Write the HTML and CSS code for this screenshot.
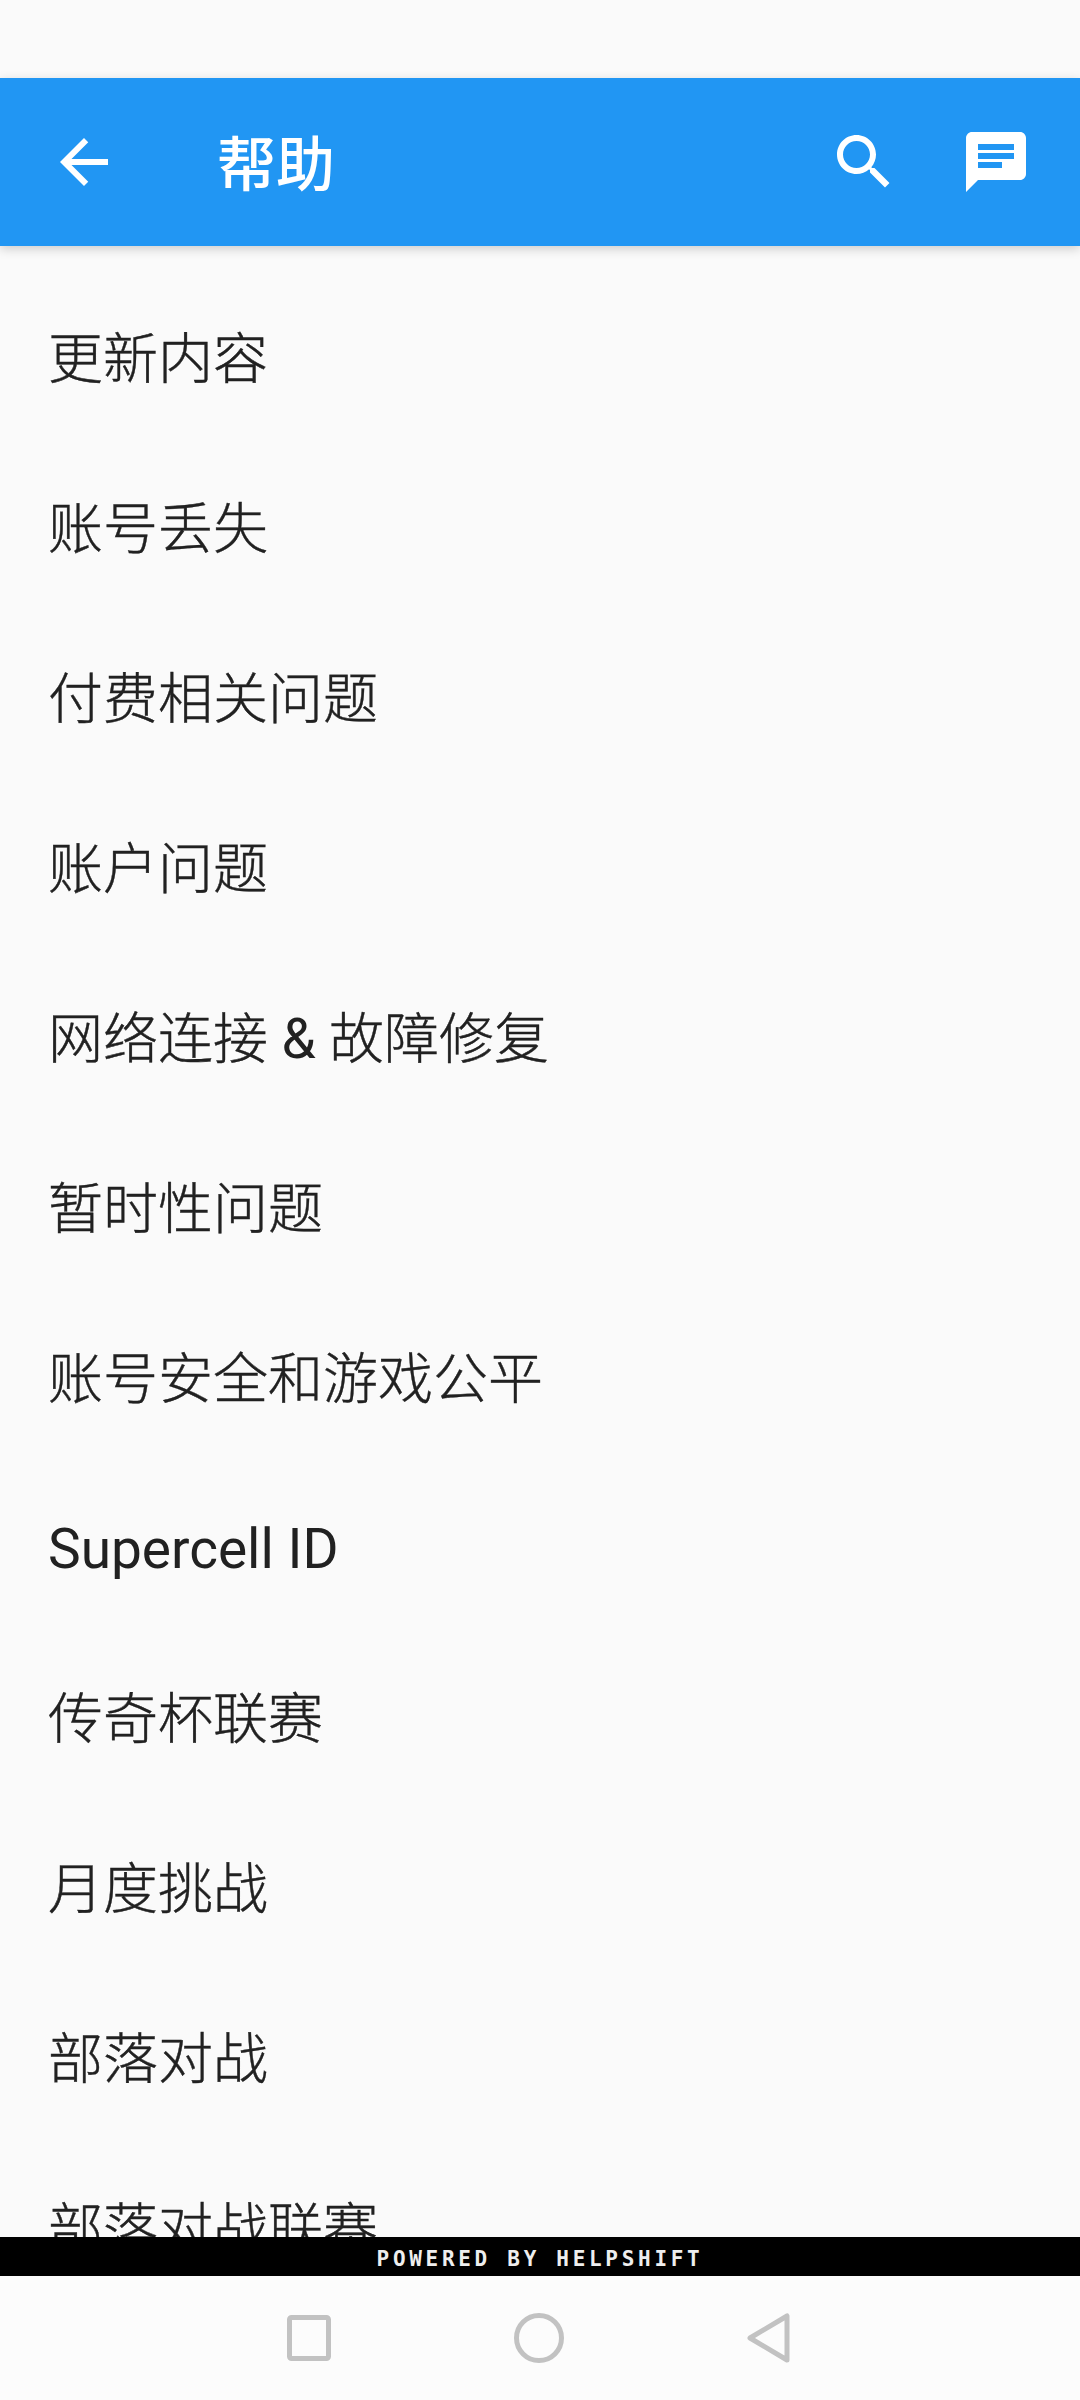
FILE: index.html
```html
<!DOCTYPE html>
<html lang="zh-CN">

<head>
    <meta charset="UTF-8">
    <meta name="viewport" content="width=device-width, initial-scale=1.0">
    <title>帮助</title>
    <link rel="stylesheet" href="styles.css">
</head>

<body>
    <div class="status-bar"></div>

    <header class="app-bar">
        <svg class="icon back-icon" viewBox="0 0 24 24">
            <path d="M20 11H7.83l5.59-5.59L12 4l-8 8 8 8 1.41-1.41L7.83 13H20v-2z" />
        </svg>
        <h1 class="app-title">帮助</h1>
        <svg class="icon search-icon" viewBox="0 0 24 24">
            <path d="M15.5 14h-.79l-.28-.27C15.41 12.59 16 11.11 16 9.5 16 5.91 13.09 3 9.5 3S3 5.91 3 9.5 5.91 16 9.5 16c1.61 0 3.09-.59 4.23-1.57l.27.28v.79l5 4.99L20.49 19l-4.99-5zm-6 0C7.01 14 5 11.99 5 9.5S7.01 5 9.5 5 14 7.01 14 9.5 11.99 14 9.5 14z" />
        </svg>
        <svg class="icon chat-icon" viewBox="0 0 24 24">
            <path d="M20 2H4c-1.1 0-1.99.9-1.99 2L2 22l4-4h14c1.1 0 2-.9 2-2V4c0-1.1-.9-2-2-2zM6 9h12v2H6V9zm8 5H6v-2h8v2zm4-6H6V6h12v2z" />
        </svg>
    </header>

    <main class="faq-list">
        <div class="faq-row">更新内容</div>
        <div class="faq-row">账号丢失</div>
        <div class="faq-row">付费相关问题</div>
        <div class="faq-row">账户问题</div>
        <div class="faq-row">网络连接 <span class="latin">&amp;</span> 故障修复</div>
        <div class="faq-row">暂时性问题</div>
        <div class="faq-row">账号安全和游戏公平</div>
        <div class="faq-row"><span class="latin">Supercell ID</span></div>
        <div class="faq-row">传奇杯联赛</div>
        <div class="faq-row">月度挑战</div>
        <div class="faq-row">部落对战</div>
        <div class="faq-row">部落对战联赛</div>
    </main>

    <div class="powered-by">POWERED BY HELPSHIFT</div>

    <nav class="nav-bar">
        <svg class="nav-icon nav-square" viewBox="0 0 44 46">
            <rect x="2.5" y="2.5" width="39" height="41" rx="2" />
        </svg>
        <svg class="nav-icon nav-circle" viewBox="0 0 50 50">
            <circle cx="25" cy="25" r="22.5" />
        </svg>
        <svg class="nav-icon nav-back" viewBox="0 0 43 50">
            <path d="M40 3 L40 47 L3 25 Z" />
        </svg>
    </nav>
</body>

</html>
```
FILE: styles.css
```css
body {
    margin: 0;
    width: 1080px;
    height: 2400px;
    display: flex;
    flex-direction: column;
    overflow: hidden;
    background-color: #fafafa;
    font-family: Roboto, "Noto Sans CJK SC", sans-serif;
}

.status-bar {
    height: 78px;
    flex: none;
}

.app-bar {
    height: 168px;
    flex: none;
    display: flex;
    align-items: center;
    background-color: #2196f3;
    box-shadow: 0 3px 10px rgba(0, 0, 0, 0.18);
    position: relative;
    z-index: 1;
    padding: 0 48px;
}

.icon {
    width: 72px;
    height: 72px;
    fill: #fff;
    flex: none;
}

.app-title {
    margin: 0 0 4px 97px;
    flex: 1;
    font-size: 59px;
    font-weight: 500;
    color: #fff;
}

.chat-icon {
    margin-left: 60px;
}

.faq-list {
    flex: 1;
    min-height: 0;
    overflow: hidden;
    padding-top: 28px;
}

.faq-row {
    height: 170px;
    line-height: 170px;
    padding-left: 48px;
    font-size: 55px;
    font-weight: 300;
    color: #212121;
    -webkit-text-stroke: 0.4px #212121;
}

.latin {
    font-weight: 400;
    -webkit-text-stroke: 0;
}

.powered-by {
    height: 39px;
    flex: none;
    box-sizing: border-box;
    padding-top: 5px;
    display: flex;
    align-items: center;
    justify-content: center;
    background-color: #000;
    color: #eee;
    font-family: "DejaVu Sans Mono", monospace;
    font-size: 21px;
    font-weight: bold;
    letter-spacing: 3.7px;
}

.nav-bar {
    height: 124px;
    flex: none;
    box-sizing: border-box;
    padding-right: 3px;
    display: flex;
    align-items: center;
    justify-content: center;
    gap: 183px;
    background-color: #fcfcfc;
}

.nav-icon {
    fill: none;
    stroke: #c2c2c2;
    stroke-width: 5;
    stroke-linejoin: round;
}

.nav-square {
    width: 44px;
    height: 46px;
}

.nav-circle {
    width: 50px;
    height: 50px;
}

.nav-back {
    width: 43px;
    height: 50px;
}
```
